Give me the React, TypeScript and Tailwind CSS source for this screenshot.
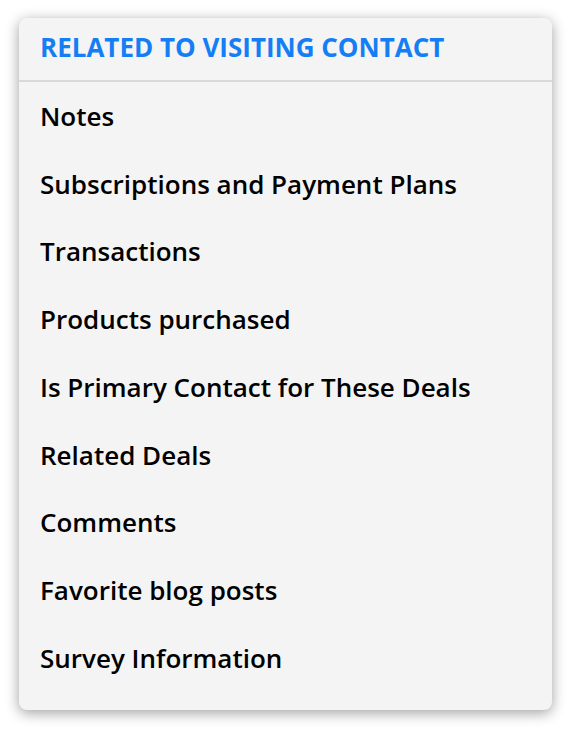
const items = [
  'Notes',
  'Subscriptions and Payment Plans',
  'Transactions',
  'Products purchased',
  'Is Primary Contact for These Deals',
  'Related Deals',
  'Comments',
  'Favorite blog posts',
  'Survey Information',
];

export default function App() {
  return (
    <div className="min-h-screen bg-white pt-[18px] pl-[19px]" style={{ fontFamily: '"Open Sans", sans-serif' }}>
      <div className="w-[533px] h-[692px] rounded-[8px] bg-[#f4f4f4] shadow-[0_3px_14px_rgba(0,0,0,0.38)] overflow-hidden">
        <div className="h-[58px] flex items-center px-[21px] pb-[4px] border-b-2 border-[#d9d9d9] box-content">
          <span className="text-[26px] font-bold text-[#157ef4] leading-none">
            RELATED TO VISITING CONTACT
          </span>
        </div>
        <div>
          {items.map((t) => (
            <div key={t} className="h-[67.75px] flex items-center px-[21px]">
              <span className="text-[26px] font-semibold text-black leading-none">{t}</span>
            </div>
          ))}
        </div>
      </div>
    </div>
  );
}
